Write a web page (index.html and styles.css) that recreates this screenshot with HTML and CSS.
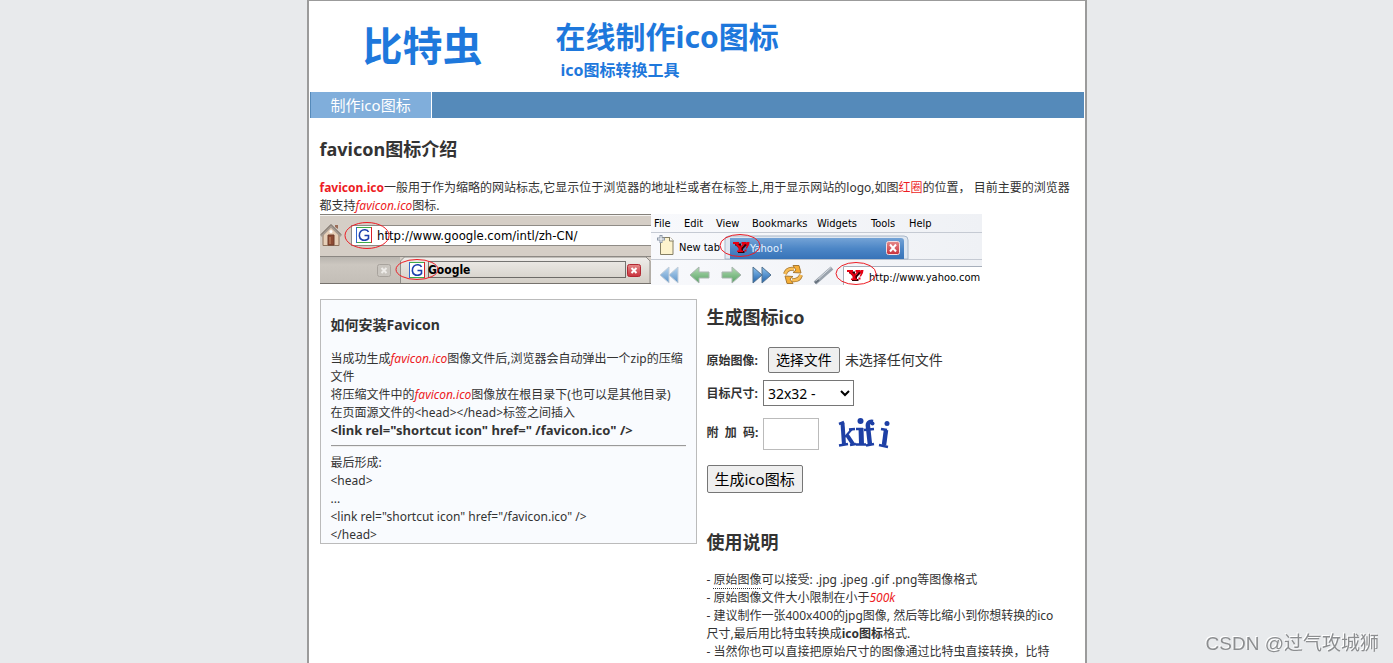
FILE: index.html
```html
<!DOCTYPE html>
<html lang="zh-CN">
<head>
<meta charset="utf-8">
<title>比特虫 - 在线制作ico图标</title>
<link rel="stylesheet" href="styles.css">
</head>
<body>
<div class="page">
  <header class="header">
    <div class="logo">比特虫</div>
    <div class="titles">
      <h1 class="site-title">在线制作ico图标</h1>
      <p class="site-subtitle">ico图标转换工具</p>
    </div>
  </header>
  <nav class="nav"><a class="nav-link" href="#">制作ico图标</a></nav>
  <main class="content">
    <section class="intro">
      <h2 class="heading">favicon图标介绍</h2>
      <p><strong class="red">favicon.ico</strong>一般用于作为缩略的网站标志,它显示位于浏览器的地址栏或者在标签上,用于显示网站的logo,如图<span class="red">红圈</span>的位置， 目前主要的浏览器都支持<em>favicon.ico</em>图标.</p>
    </section>
    <div class="shots">
      <svg class="shot" width="331" height="70" viewBox="0 0 331 70" role="img" aria-label="Google favicon">
        <defs>
          <linearGradient id="tabOff" x1="0" y1="0" x2="0" y2="1"><stop offset="0" stop-color="#b9b5af"/><stop offset=".3" stop-color="#ccc7c0"/><stop offset="1" stop-color="#c3beb7"/></linearGradient>
          <linearGradient id="tabOn" x1="0" y1="0" x2="0" y2="1"><stop offset="0" stop-color="#efedea"/><stop offset="1" stop-color="#d3cec6"/></linearGradient>
          <linearGradient id="closeRed" x1="0" y1="0" x2="0" y2="1"><stop offset="0" stop-color="#e58a8a"/><stop offset="1" stop-color="#c9303b"/></linearGradient>
          <g id="gIcon">
            <rect width="16" height="16" fill="#fff"/>
            <path d="M0 .5H15" stroke="#3faa49"/><path d="M.5 0V16" stroke="#3366cc"/><path d="M15.5 0V16" stroke="#d8232a"/><path d="M1 15.5H15" stroke="#3faa49"/>
            <path d="M12.500 5C11.500 2.300 7 2 4.800 4.300 2.500 7 3 11 5.500 12.500 8 14 11.500 13 12.500 11.500V8.500H8.500" fill="none" stroke="#1c3fae" stroke-width="1.600"/>
          </g>
        </defs>
        <rect width="331" height="70" fill="#d5cec6"/>
        <path d="M0 .5H331" stroke="#85817b"/><path d="M0 1.500H331" stroke="#f5f3f0"/>
        <rect x="31.500" y="11.500" width="310" height="20" fill="#fff" stroke="#8f8b86"/>
        <path d="M0 42.500H331" stroke="#8b8782"/>
        <rect y="43" width="80" height="26" fill="url(#tabOff)"/>
        <path d="M80.500 69V47l4-4H326l4 4V69" fill="url(#tabOn)" stroke="#8f8b86"/>
        <path d="M0 69.500H331" stroke="#76726d"/>
        <g>
          <path d="M3 21V31.500H19V21L11 13Z" fill="#e6cfb8" stroke="#8e735d"/>
          <path d="M1 22 11 12 21 22" fill="none" stroke="#a59b92" stroke-width="2.500"/>
          <path d="M1 20.500 11 10.500 21 20.500" fill="none" stroke="#776b62"/>
          <path d="M15 11h3v4l-3-2z" fill="#9b6d58"/>
          <path d="M8 21h6v10H8z" fill="#8d4a32" stroke="#6f3d2c"/><path d="M10 23v7" stroke="#c58f6f"/>
          <circle cx="11" cy="17.500" r="1.500" fill="#fff"/>
        </g>
        <use href="#gIcon" x="36" y="13"/><use href="#gIcon" x="89" y="48"/>
        <text class="ui ui-url" x="57" y="26">http://www.google.com/intl/zh-CN/</text>
        <rect x="108.500" y="47.500" width="197" height="16" fill="none" stroke="#000" stroke-dasharray="1 1"/>
        <text class="ui ui-bold" x="108" y="60">Google</text>
        <g><rect x="57.500" y="50.500" width="13" height="12" rx="2" fill="#c9c5bf" stroke="#a8a39d"/><path d="M61.500 54l5 5M66.500 54l-5 5" stroke="#eeece9" stroke-width="2"/></g>
        <g><rect x="307.500" y="50.500" width="13" height="12" rx="2" fill="url(#closeRed)" stroke="#b12832"/><path d="M311.500 54l5 5M316.500 54l-5 5" stroke="#fff" stroke-width="2"/></g>
        <ellipse cx="47" cy="21.500" rx="22" ry="13" class="ring"/><ellipse cx="97" cy="55.500" rx="21" ry="10" class="ring"/>
      </svg>
      <svg class="shot" width="331" height="71" viewBox="0 0 331 71" role="img" aria-label="Yahoo favicon">
        <defs>
          <linearGradient id="bar" x1="0" y1="0" x2="1" y2="0"><stop offset="0" stop-color="#f8f9fc"/><stop offset="1" stop-color="#eff1f5"/></linearGradient>
          <linearGradient id="blueTab" x1="0" y1="0" x2="0" y2="1"><stop offset="0" stop-color="#74a3d6"/><stop offset=".5" stop-color="#4c86c6"/><stop offset="1" stop-color="#3773b8"/></linearGradient>
          <linearGradient id="paleArrow" x1="0" y1="0" x2="0" y2="1"><stop offset="0" stop-color="#b9d6f0"/><stop offset="1" stop-color="#5b93c9"/></linearGradient>
          <linearGradient id="blueArrow" x1="0" y1="0" x2="0" y2="1"><stop offset="0" stop-color="#8fc4f0"/><stop offset="1" stop-color="#1f62ac"/></linearGradient>
          <linearGradient id="greenArrow" x1="0" y1="0" x2="0" y2="1"><stop offset="0" stop-color="#b5dcb5"/><stop offset="1" stop-color="#55a262"/></linearGradient>
          <g id="yIcon" fill="#e60012"><path d="M2 2.500H8V4.500H7.500L9 6 11 4.500H10V2.500H14.500V4.500H13.500L10 8V10H11.500V12H5V10H6.500V8L3 4.500H2Z" fill="#300004"/><path d="M0 1H6V3H5L7.500 5.500 9.500 3H8.500V1H13V3H12L8.500 7V9.500H10V11H4V9.500H5.500V7L2 3H0Z"/><path d="M12.500 3.500 13.500 1H16.500L16 4 14 7.500H12.500L14 4ZM11.500 8.500H13.500V10.500H11.500Z"/></g>
        </defs>
        <rect width="331" height="71" fill="url(#bar)"/>
        <path d="M0 18.500H331M0 45.500H331" stroke="#c5cad3"/>
        <g class="ui">
          <text x="3" y="13">File</text><text x="33" y="13">Edit</text><text x="65" y="13">View</text><text x="101" y="13">Bookmarks</text><text x="166" y="13">Widgets</text><text x="220" y="13">Tools</text><text x="258" y="13">Help</text>
          <text x="28" y="37">New tab</text>
        </g>
        <path d="M9.500 23.500H19l3 3V40.500H9.500Z" fill="#fdf3cd" stroke="#857f65"/><path d="M18.500 23v4h4" fill="#fff" stroke="#857f65"/><path d="M10 21v8M6 25h8" stroke="#8c98a8" stroke-width="3"/><path d="M10 22v6M7 25h6" stroke="#fff"/>
        <path d="M74 45V26q0-4 4-4H253q4 0 4 4V45Z" fill="#dfe7f1" stroke="#a9b7c8"/>
        <path d="M79 45V24H250q3 0 3 3V45Z" fill="url(#blueTab)"/>
        <text class="ui ui-light" x="99" y="38">Yahoo!</text>
        <rect x="235.500" y="27.500" width="13" height="13" rx="2" fill="url(#closeRed)" stroke="#f3dfe2"/><path d="M239 30.500l6 7M245 30.500l-6 7" stroke="#fff" stroke-width="2"/>
        <path d="M18 53v16l-9-8zM27 53v16l-9-8z" fill="url(#paleArrow)" stroke="#c3ced9"/>
        <path d="M39 61l9-8v5h10v6H48v5z" fill="url(#greenArrow)" stroke="#a9b5af"/>
        <path d="M90 61l-9-8v5H71v6h10v5z" fill="url(#greenArrow)" stroke="#a9b5af"/>
        <path d="M102 53v16l9-8zM111 53v16l9-8z" fill="url(#blueArrow)" stroke="#53728f"/>
        <g fill="none" stroke="#a87a35" stroke-width="4"><path d="M134 60q2-6 9-5M150 61q-2 6-9 5"/></g>
        <path d="M142 51.500 148 51.500 150 59 142 58.500 145 56ZM142 69.500 136 69.500 134 62 142 62.500 139 65Z" fill="#f6ae35" stroke="#a87a35"/>
        <g fill="none" stroke="#f8bd55" stroke-width="2.500"><path d="M134 60q2-6 9-5M150 61q-2 6-9 5"/></g>
        <path d="M164 69 181 54" stroke="#9aa3ad" stroke-width="4"/><path d="M165 67 180 53.500" stroke="#d8dde2"/><path d="M164 69 168 66" stroke="#66717d" stroke-width="2"/>
        <path d="M192.500 71V52.500H331" fill="none" stroke="#a7afbb"/><rect x="193" y="53" width="138" height="18" fill="#fff"/>
        <use href="#yIcon" x="82" y="27"/><use href="#yIcon" x="196" y="55"/>
        <text class="ui" x="218" y="67">http://www.yahoo.com</text>
        <ellipse cx="89" cy="31.500" rx="20" ry="11" class="ring"/><ellipse cx="205" cy="59.500" rx="20" ry="11" class="ring"/>
      </svg>
    </div>
    <div class="columns">
      <section class="install">
        <h3 class="subheading">如何安装Favicon</h3>
        <p>当成功生成<em>favicon.ico</em>图像文件后,浏览器会自动弹出一个zip的压缩文件<br>将压缩文件中的<em>favicon.ico</em>图像放在根目录下(也可以是其他目录)<br>在页面源文件的&lt;head&gt;&lt;/head&gt;标签之间插入<br><strong class="snippet">&lt;link rel="shortcut icon" href=" /favicon.ico" /&gt;</strong></p>
        <hr class="rule">
        <p>最后形成:<br>&lt;head&gt;<br>...<br>&lt;link rel="shortcut icon" href="/favicon.ico" /&gt;<br>&lt;/head&gt;</p>
      </section>
      <div class="side">
        <h2 class="heading">生成图标ico</h2>
        <form class="form">
          <div class="row file-row">
            <label class="label" for="file">原始图像:</label>
            <input class="file-input" type="file" id="file">
            <label class="button file-button" for="file">选择文件</label>
            <span class="file-name">未选择任何文件</span>
          </div>
          <div class="row">
            <label class="label" for="size">目标尺寸:</label>
            <select class="select" id="size"><option>32x32 -</option></select>
          </div>
          <div class="row code-row">
            <label class="label" for="code">附&nbsp; 加&nbsp; 码:</label>
            <input class="code" type="text" id="code">
            <svg class="captcha" width="54" height="34" viewBox="0 0 54 34" role="img" aria-label="kifi">
              <g fill="none" stroke="#1d3fa5">
                <path d="M4.500 6 6 28" stroke-width="4"/><path d="M1 7 6 5M1 28.500 10 27" stroke-width="2.500"/>
                <path d="M7 20 14 12" stroke-width="2"/><path d="M9 18 15 27" stroke-width="4"/><path d="M11 12.500 17 12M12 28 18 27" stroke-width="2.500"/>
                <path d="M23 11 23.500 27" stroke-width="5"/><path d="M18 12H25M18 27.500H28" stroke-width="2.500"/>
                <path d="M32 28 30 10Q29 4 35 5" stroke-width="4.500"/><path d="M26 13 36 12M28 28.500 36 27" stroke-width="2.500"/>
                <path d="M48 13 46 28" stroke-width="4.500"/><path d="M43 12 49 13M41 28 50 30" stroke-width="2.500"/>
              </g>
              <g fill="#1d3fa5"><circle cx="22.500" cy="4" r="3"/><circle cx="49" cy="6.500" r="2.500"/><circle cx="34.500" cy="6.500" r="2"/></g>
            </svg>
          </div>
          <button class="button submit" type="button">生成ico图标</button>
        </form>
        <h2 class="heading usage">使用说明</h2>
        <p>- <abbr class="abbr" title="原始图像">原始图像</abbr>可以接受: .jpg .jpeg .gif .png等图像格式<br>- 原始图像文件大小限制在小于<em>500k</em><br>- 建议制作一张400x400的jpg图像, 然后等比缩小到你想转换的ico尺寸,最后用比特虫转换成<strong>ico图标</strong>格式.<br>- 当然你也可以直接把原始尺寸的图像通过比特虫直接转换，比特</p>
      </div>
    </div>
  </main>
</div>
<div class="watermark">CSDN @过气攻城狮</div>
</body>
</html>
```
FILE: styles.css
```css
* { box-sizing: border-box; }
body {
  margin: 0;
  background: #e8eaec;
  color: #333;
  font: 12px/18px "Noto Sans", "Noto Sans CJK SC", sans-serif;
}
h1, h2, h3, p { margin: 0; }
.page {
  max-width: 780px;
  min-height: 100vh;
  margin: 0 auto;
  padding: 0 1px;
  background: #fff;
  border: 2px solid #9b9b9b;
  border-top-width: 1px;
  border-bottom: 0;
}
.header { display: flex; gap: 73px; padding: 15px 0 10px 53px; color: #1e78dc; }
.logo { font-size: 40px; line-height: 60px; font-weight: bold; }
.site-title { font-size: 30px; line-height: 42px; }
.site-subtitle { padding-left: 5px; font-size: 16px; line-height: 24px; font-weight: bold; }
.nav { display: flex; height: 26px; background: #558aba; padding-left: 1px; }
.nav-link {
  padding: 0 20px;
  border-right: 1px solid #fff;
  background: #80aedb;
  color: #fff;
  font-size: 15px;
  line-height: 26px;
  text-decoration: none;
}
.content { padding: 18px 10px 0; }
.heading { font-size: 18px; line-height: 26px; margin-bottom: 17px; }
.red, em { color: #ed1c24; }
.shots { display: flex; height: 71px; margin-top: -1px; }
.shot { display: block; }
.ui { font: 11px "DejaVu Sans Condensed", "DejaVu Sans", sans-serif; fill: #000; }
.ui-url { font-size: 13px; }
.ui-bold { font-size: 12px; font-weight: bold; }
.ui-light { fill: #e8f3ff; }
.ring { fill: none; stroke: #ed1c24; }
.columns { display: flex; gap: 10px; margin-top: 14px; align-items: flex-start; }
.install { width: 377px; padding: 14px 10px 0; border: 1px solid #bbb; background: #f9fbfe; }
.install p:last-child { margin-bottom: -1px; }
.subheading { font-size: 14px; line-height: 22px; margin-bottom: 14px; }
.snippet { font-size: 13px; line-height: 16px; }
.rule { margin: 5px 0 7px; border: 0; border-top: 1px solid #9a9a9a; border-bottom: 1px solid #eee; }
.side { flex: 1; padding: 5px 20px 0 0; }
.row { display: flex; align-items: center; gap: 5px; margin-bottom: 7px; }
.label { font-weight: bold; }
.row > .label { padding-top: 2px; }
.button {
  padding: 0 7px;
  border: 1px solid #767676;
  border-radius: 2px;
  background: #efefef;
  color: #000;
  font: 15px/24px "Noto Sans", "Noto Sans CJK SC", sans-serif;
}
.file-input { position: absolute; width: 1px; height: 1px; opacity: 0; }
.file-button { font-size: 14px; margin-left: 5px; }
.file-name { font-size: 14px; }
.select { width: 91px; height: 26px; border: 1px solid #767676; background: #fff; color: #000; font: 14px "Noto Sans", sans-serif; }
.row.code-row { margin: 11px 0 14px; }
.row.code-row > .label { padding: 0 0 2px; }
.code { width: 56px; height: 32px; border: 1px solid #bbb; }
.captcha { margin-left: 14px; }
.submit { line-height: 26px; }
.usage { margin: 36px 0 16px; }
.abbr { text-decoration: none; border-bottom: 1px dotted #333; }
.watermark {
  position: fixed;
  right: 14px;
  bottom: 5px;
  color: #8c8e90;
  font: 19px/28px "Liberation Sans", "Noto Sans CJK SC", sans-serif;
  text-shadow: -1px -1px #fff;
}
```
